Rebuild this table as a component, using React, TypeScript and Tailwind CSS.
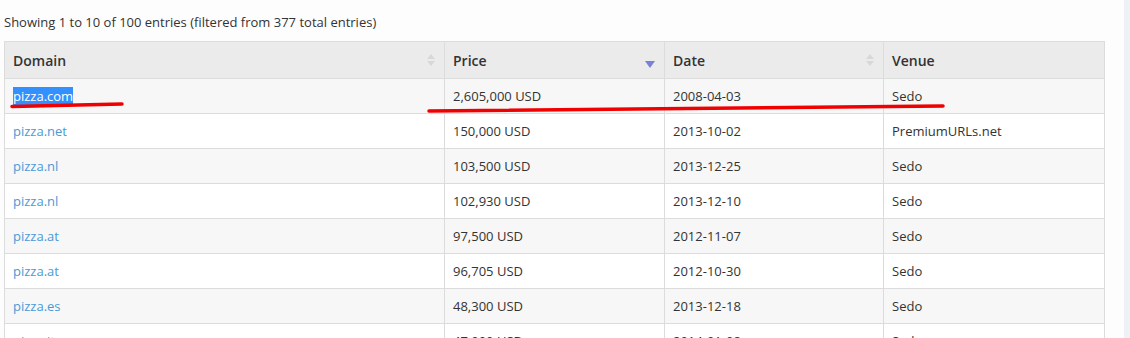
const rows = [
  { domain: "pizza.com", price: "2,605,000 USD", date: "2008-04-03", venue: "Sedo" },
  { domain: "pizza.net", price: "150,000 USD", date: "2013-10-02", venue: "PremiumURLs.net" },
  { domain: "pizza.nl", price: "103,500 USD", date: "2013-12-25", venue: "Sedo" },
  { domain: "pizza.nl", price: "102,930 USD", date: "2013-12-10", venue: "Sedo" },
  { domain: "pizza.at", price: "97,500 USD", date: "2012-11-07", venue: "Sedo" },
  { domain: "pizza.at", price: "96,705 USD", date: "2012-10-30", venue: "Sedo" },
  { domain: "pizza.es", price: "48,300 USD", date: "2013-12-18", venue: "Sedo" },
  { domain: "pizza.it", price: "47,000 USD", date: "2014-01-08", venue: "Sedo" },
];

function SortBoth() {
  return (
    <svg width="8" height="12" viewBox="0 0 8 12" className="shrink-0">
      <path d="M4 0 L8 5 L0 5 Z" fill="#d8d8d8" />
      <path d="M4 12 L8 7 L0 7 Z" fill="#d8d8d8" />
    </svg>
  );
}

function SortDesc() {
  return (
    <svg width="10" height="7" viewBox="0 0 10 7" className="shrink-0">
      <path d="M0 0 L10 0 L5 7 Z" fill="#7b7fd6" />
    </svg>
  );
}

export default function App() {
  return (
    <div
      className="relative flex h-[338px] w-[1130px] overflow-hidden bg-[#fdfdfd] text-[#333]"
      style={{ fontFamily: '"Open Sans", "Noto Sans", sans-serif' }}
    >
      <div className="flex-1 pl-1 pt-[13px]">
        <p className="h-[28px] text-[13px] leading-[18px]">
          Showing 1 to 10 of 100 entries (filtered from 377 total entries)
        </p>
        <table className="w-[1100px] table-fixed border-collapse text-[13px]">
          <colgroup>
            <col className="w-[440px]" />
            <col className="w-[220px]" />
            <col className="w-[219px]" />
            <col className="w-[221px]" />
          </colgroup>
          <thead>
            <tr className="h-[37px] bg-[#ebebeb] text-[14px]">
              <th className="border border-[#dcdcdc] px-2 text-left font-semibold">
                <div className="flex items-center justify-between pr-[1px]">
                  <span>Domain</span>
                  <SortBoth />
                </div>
              </th>
              <th className="border border-[#dcdcdc] px-2 text-left font-semibold">
                <div className="flex items-center justify-between pr-[1px]">
                  <span>Price</span>
                  <span className="mt-[9px]">
                    <SortDesc />
                  </span>
                </div>
              </th>
              <th className="border border-[#dcdcdc] px-2 text-left font-semibold">
                <div className="flex items-center justify-between pr-[1px]">
                  <span>Date</span>
                  <SortBoth />
                </div>
              </th>
              <th className="border border-[#dcdcdc] px-2 text-left font-semibold">
                <span>Venue</span>
              </th>
            </tr>
          </thead>
          <tbody>
            {rows.map((r, i) => (
              <tr key={i} className={`h-[35px] ${i % 2 === 0 ? "bg-[#f7f7f7]" : "bg-white"}`}>
                <td className="border border-[#dcdcdc] px-2 pt-[2px]">
                  {i === 0 ? (
                    <span className="bg-[#3390ff] text-white">{r.domain}</span>
                  ) : (
                    <span className="text-[#4a9ad6]">{r.domain}</span>
                  )}
                </td>
                <td className="border border-[#dcdcdc] px-2 pt-[2px]">{r.price}</td>
                <td className="border border-[#dcdcdc] px-2 pt-[2px]">{r.date}</td>
                <td className="border border-[#dcdcdc] px-2 pt-[2px]">{r.venue}</td>
              </tr>
            ))}
          </tbody>
        </table>
      </div>
      <div className="w-[6px] shrink-0 bg-[#eef1f5]" />

      {/* red marker annotations */}
      <svg className="pointer-events-none absolute inset-0" width="1130" height="338">
        <path d="M12 106.5 L122 104" stroke="#f00000" strokeWidth="3.5" strokeLinecap="round" fill="none" />
        <path d="M429 111 L943 106" stroke="#f00000" strokeWidth="3.5" strokeLinecap="round" fill="none" />
      </svg>
    </div>
  );
}
